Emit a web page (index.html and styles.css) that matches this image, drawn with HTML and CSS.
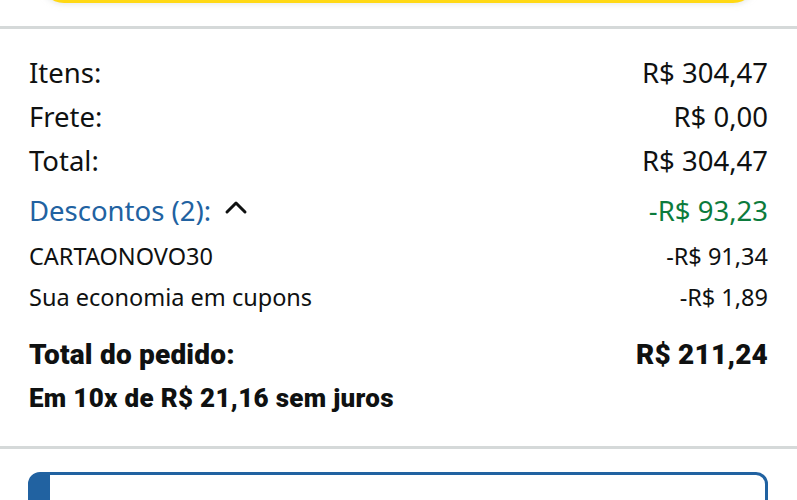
FILE: index.html
```html
<!DOCTYPE html>
<html lang="pt-BR">
<head>
    <meta charset="UTF-8" />
    <meta name="viewport" content="width=device-width, initial-scale=1.0" />
    <title>Resumo do pedido</title>
    <link rel="stylesheet" href="styles.css">
</head>
<body>

<div class="top-action">
    <button class="buy-button" type="button" aria-label="Finalizar pedido"></button>
</div>

<div class="divider"></div>

<div class="summary">
    <div class="row">
        <span>Itens:</span>
        <span>R$ 304,47</span>
    </div>
    <div class="row">
        <span>Frete:</span>
        <span>R$ 0,00</span>
    </div>
    <div class="row">
        <span>Total:</span>
        <span>R$ 304,47</span>
    </div>
    <div class="row discounts">
        <span class="toggle">
            Descontos (2):
            <svg class="chevron" width="24" height="16" viewBox="0 0 24 16">
                <polyline points="3,13 12,4 21,13" fill="none" stroke="#0f1111" stroke-width="3" stroke-linecap="round" stroke-linejoin="round" />
            </svg>
        </span>
        <span class="saving">-R$ 93,23</span>
    </div>
    <div class="row small">
        <span>CARTAONOVO30</span>
        <span>-R$ 91,34</span>
    </div>
    <div class="row small">
        <span>Sua economia em cupons</span>
        <span>-R$ 1,89</span>
    </div>
    <div class="row grand">
        <span>Total do pedido:</span>
        <span>R$ 211,24</span>
    </div>
    <div class="row installments">
        <span>Em 10x de R$ 21,16 sem juros</span>
    </div>
</div>

<div class="divider"></div>

<div class="alert">
    <div class="alert-body"></div>
</div>

</body>
</html>
```

FILE: styles.css
```css
body {
    margin: 0;
    background: #fff;
    font-family: "Noto Sans", Arial, sans-serif;
    color: #0f1111;
    overflow: hidden;
}

/* botão amarelo cortado no topo */
.top-action {
    padding: 0 40px 23px 40px;
}
.buy-button {
    display: block;
    width: 100%;
    height: 48px;
    margin-top: -45px;
    border: none;
    border-radius: 24px;
    background: #ffd814;
    box-shadow: 0 2px 5px rgba(213, 217, 217, 0.5);
}

.divider {
    height: 3px;
    background: #d5d9d9;
}

/* resumo */
.summary {
    padding: 21px 29px 26px 29px;
}
.row {
    display: flex;
    justify-content: space-between;
    align-items: center;
    height: 44px;
    font-size: 27.5px;
}
.discounts {
    margin-top: 6px;
    margin-bottom: 3px;
}
.toggle {
    display: flex;
    align-items: center;
    gap: 13px;
    color: #2162a1;
}
.chevron {
    margin-top: -6px;
}
.saving {
    color: #0c7b3c;
}
.row.small {
    height: 41px;
    font-size: 23.5px;
}
.row.grand {
    margin-top: 15px;
    font-family: Roboto, "Noto Sans", sans-serif;
    font-weight: 900;
    font-size: 28px;
    letter-spacing: 0.2px;
}
.row.installments {
    font-family: Roboto, "Noto Sans", sans-serif;
    font-weight: 900;
    font-size: 26px;
    letter-spacing: 0.3px;
}

/* aviso azul */
.alert {
    margin: 23px 29px 0 28px;
    border: 3px solid #2162a1;
    border-left-width: 22px;
    border-radius: 12px;
    height: 80px;
}
```
